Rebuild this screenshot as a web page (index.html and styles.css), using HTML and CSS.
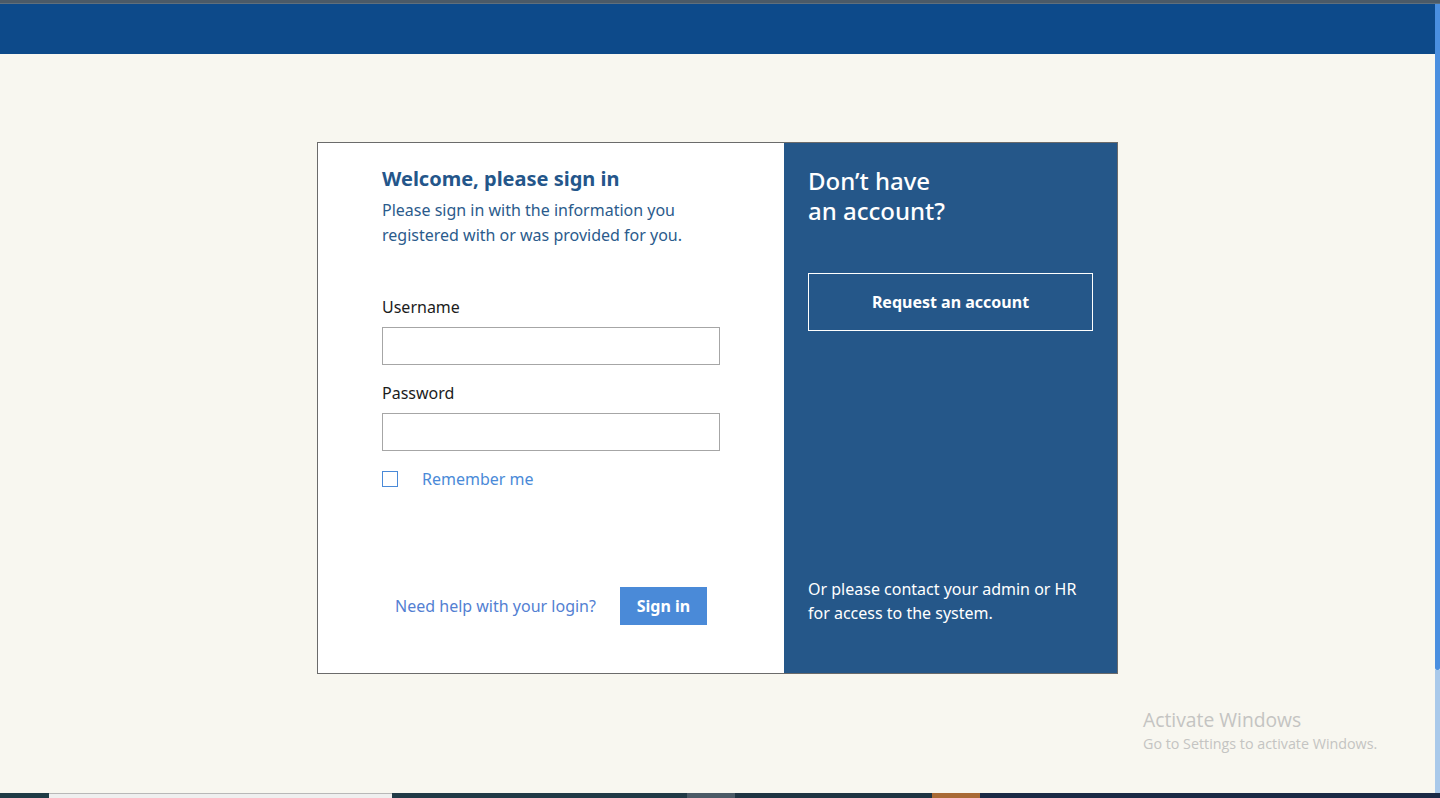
FILE: index.html
```html
<!DOCTYPE html>
<html lang="en">
<head>
<meta charset="utf-8">
<title>Sign in</title>
<link rel="stylesheet" href="styles.css">
</head>
<body>
<div class="top-strip"></div>
<div class="window">
  <div class="page">
    <header class="app-bar"></header>
    <main class="main">
      <section class="card">
        <div class="signin">
          <h1 class="signin-title">Welcome, please sign in</h1>
          <p class="signin-sub">Please sign in with the information you<br>registered with or was provided for you.</p>
          <form class="form">
            <label class="field-label" for="u">Username</label>
            <input class="field-input" id="u" type="text">
            <label class="field-label" for="p">Password</label>
            <input class="field-input" id="p" type="password">
            <label class="remember">
              <span class="checkbox"></span>
              <span class="remember-text">Remember me</span>
            </label>
          </form>
          <div class="signin-footer">
            <a class="help-link" href="#">Need help with your login?</a>
            <button class="btn-signin" type="button">Sign in</button>
          </div>
        </div>
        <aside class="request">
          <h2 class="request-title">Don’t have<br>an account?</h2>
          <button class="btn-request" type="button">Request an account</button>
          <p class="request-note">Or please contact your admin or HR<br>for access to the system.</p>
        </aside>
      </section>
    </main>
    <div class="watermark">
      <div class="wm-title">Activate Windows</div>
      <div class="wm-sub">Go to Settings to activate Windows.</div>
    </div>
  </div>
  <div class="scrollbar">
    <div class="scroll-thumb"></div>
    <div class="scroll-track"></div>
  </div>
</div>
<div class="taskbar">
  <div class="tb-start"></div>
  <div class="tb-search"></div>
  <div class="tb-gap"></div>
  <div class="tb-app"></div>
  <div class="tb-gap2"></div>
  <div class="tb-orange"></div>
  <div class="tb-rest"></div>
</div>
</body>
</html>
```

FILE: styles.css
```css
* { box-sizing: border-box; }
html, body { margin: 0; padding: 0; }
body {
  width: 1440px;
  height: 798px;
  overflow: hidden;
  font-family: "Noto Sans", "Open Sans", sans-serif;
  background: #f8f7f0;
  display: flex;
  flex-direction: column;
}
.top-strip { height: 4px; background: #4b5a67; border-bottom: 1px solid #5f6f7c; }
.window { display: flex; height: 789px; }
.page { flex: 1; position: relative; display: flex; flex-direction: column; background: #f8f7f0; }
.app-bar { height: 50px; background: #0d4a8a; }
.main { display: flex; justify-content: center; padding-top: 88px; }
.card {
  display: flex;
  width: 801px;
  height: 532px;
  border: 1px solid #6b6b6b;
  background: #fff;
}
.signin {
  width: 466px;
  padding: 22px 64px 0 64px;
  display: flex;
  flex-direction: column;
}
.signin-title {
  margin: 0;
  font-size: 20px;
  line-height: 27px;
  font-weight: 700;
  color: #24568a;
}
.signin-sub {
  margin: 6px 0 0;
  font-size: 16px;
  line-height: 25px;
  color: #2b5b8c;
}
.form { display: flex; flex-direction: column; margin-top: 47px; }
.field-label { font-size: 16px; line-height: 24px; color: #1c1c1c; }
.field-input {
  margin-top: 8px;
  width: 338px;
  height: 38px;
  border: 1px solid #a6a6a6;
  background: #fff;
  margin-bottom: 16px;
  font: inherit;
}
.remember { display: flex; align-items: center; gap: 24px; height: 24px; }
.checkbox { width: 16px; height: 16px; border: 1px solid #4a8ad8; background: #fff; }
.remember-text { font-size: 16px; line-height: 24px; color: #4a8ad8; }
.signin-footer {
  margin-top: auto;
  margin-bottom: 48px;
  display: flex;
  align-items: center;
  justify-content: center;
  gap: 24px;
}
.help-link { font-size: 16px; color: #5380d2; text-decoration: none; }
.btn-signin {
  width: 87px;
  height: 38px;
  border: 0;
  background: #4a8ad8;
  color: #fff;
  font-family: inherit;
  font-size: 16px;
  font-weight: 700;
  padding: 0;
}
.request {
  flex: 1;
  background: #255789;
  padding: 23px 24px 48px 24px;
  display: flex;
  flex-direction: column;
  color: #fff;
}
.request-title {
  margin: 0;
  font-size: 24px;
  line-height: 30px;
  font-weight: 500;
}
.btn-request {
  margin-top: 47px;
  height: 58px;
  width: 285px;
  background: transparent;
  border: 1px solid #fff;
  color: #fff;
  font-family: inherit;
  font-size: 16px;
  font-weight: 700;
}
.request-note {
  margin: auto 0 0;
  font-size: 16px;
  line-height: 24px;
}
.watermark {
  position: absolute;
  left: 1143px;
  top: 703px;
  font-family: "Open Sans", "Noto Sans", sans-serif;
  color: #c4c4c2;
}
.wm-title { font-size: 19.3px; line-height: 26px; }
.wm-sub { font-size: 14.3px; line-height: 21px; }
.scrollbar { width: 5px; display: flex; flex-direction: column; }
.scroll-thumb { height: 666px; background: #4a8fe0; border-radius: 0 0 2px 2px; }
.scroll-track { flex: 1; background: #a9c9ea; }
.taskbar { height: 5px; display: flex; background: #1d3a44; }
.tb-start { width: 49px; background: #1f3b45; }
.tb-search { width: 343px; background: #efefef; border-top: 1px solid #b8b8b8; }
.tb-gap { width: 295px; background: #213a46; }
.tb-app { width: 48px; background: #4b5a66; }
.tb-gap2 { width: 197px; background: #1f3442; }
.tb-orange { width: 48px; background: #a96a35; }
.tb-rest { flex: 1; background: #1b2a45; }
```
